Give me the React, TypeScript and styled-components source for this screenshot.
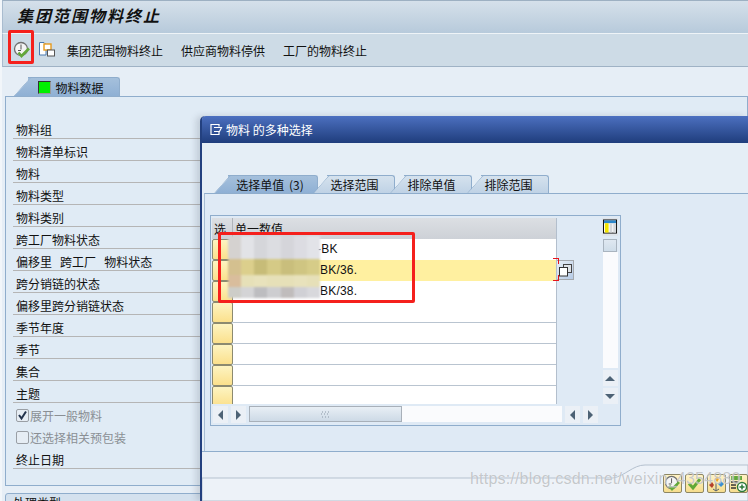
import React from 'react'
import styled, { createGlobalStyle } from 'styled-components'

const GlobalStyle = createGlobalStyle`
  html, body {
    margin: 0;
    padding: 0;
    overflow: hidden;
  }
  * {
    box-sizing: border-box;
  }
`

const Screen = styled.div`
  position: relative;
  width: 748px;
  height: 501px;
  overflow: hidden;
  display: flex;
  flex-direction: column;
  background: #e6eef6;
  border-left: 2px solid #f2f6fa;
  color: #111;
  font-family: 'Noto Sans CJK SC', 'Liberation Sans', sans-serif;
  font-size: 12px;
`
const TitleBar = styled.header`
  height: 33px;
  flex: none;
  padding: 3px 0 0 14px;
  background: linear-gradient(#d5e0ea, #b7cadb);
  border-top: 1px solid #9db0c2;
  border-left: 1px solid #a9bccf;
  font-size: 16px;
  line-height: 22px;
  font-weight: 700;
  font-style: italic;
  letter-spacing: 2px;
`
const Toolbar = styled.nav`
  height: 34px;
  flex: none;
  display: flex;
  align-items: center;
  padding-left: 10px;
  background: #cddbe6;
  border-top: 1px solid #eef3f7;
  border-left: 1px solid #a9bccf;
  border-bottom: 1px solid #9fb2c5;
`
const ToolIcons = styled.div`
  display: flex;
  gap: 7px;
  margin-right: 11px;
`
const ToolIcon = styled.span`
  display: flex;
  width: 18px;
  height: 18px;
`
const ToolLabel = styled.span`
  & + & {
    margin-left: 18px;
  }
`
const Main = styled.main`
  flex: 1;
  padding: 10px 0 0 3px;
  display: flex;
  flex-direction: column;
`
const TabStrip = styled.div<{ $height: number }>`
  display: flex;
  flex: none;
  height: ${(p) => p.$height}px;
`
const Tab = styled.div<{ $active?: boolean; $width: number; $lead?: number }>`
  position: relative;
  width: ${(p) => p.$width}px;
  height: 100%;
  display: flex;
  align-items: center;
  justify-content: center;
  gap: 4px;
  margin-left: ${(p) => p.$lead ?? 9}px;
  padding-right: ${(p) => (p.$active ? 5 : 12)}px;
  background: ${(p) =>
    p.$active
      ? 'linear-gradient(#a5c0dc, #8fb0d4)'
      : 'linear-gradient(#d5e2ee, #bfd2e5)'};
  border: 1px solid #8fadcc;
  border-left: 0;
  border-bottom: 0;
  border-radius: 0 3px 0 0;
  &::before {
    content: '';
    position: absolute;
    left: -6px;
    top: -1px;
    bottom: 0;
    width: 16px;
    background: inherit;
    border-left: 1px solid #8fadcc;
    border-top: 1px solid #8fadcc;
    transform: skewX(-42deg);
    border-radius: 2px 0 0 0;
  }
  & > * {
    position: relative;
  }
`
const TabText = styled.span`
  position: relative;
  white-space: pre;
  word-spacing: 2px;
`
const Status = styled.span`
  width: 13px;
  height: 13px;
  background: #00f000;
  border: 1px solid #333;
  border-right-color: #999;
  border-bottom-color: #999;
`
const FormPanel = styled.section`
  height: 390px;
  flex: none;
  padding: 20px 0 0 7px;
  background: #e0ebf5;
  border: 1px solid #8fadcc;
`
const FormRow = styled.div<{ $plain?: boolean }>`
  height: 22px;
  padding: 3px 0 0 3px;
  display: flex;
  align-items: center;
  gap: 1px;
  border-bottom: 1px solid ${(p) => (p.$plain ? 'transparent' : '#b5b5b5')};
  white-space: pre;
  color: ${(p) => (p.$plain ? '#8a8f94' : '#111')};
`
const CheckBox = styled.span`
  width: 13px;
  height: 13px;
  display: flex;
  border: 1px solid #9a9fa5;
  border-radius: 2px;
  background: #e6edf4;
`
const LowerTab = styled.div`
  margin-top: 7px;
  height: 20px;
  padding-left: 7px;
  background: #d4e1ee;
  border: 1px solid #8fadcc;
  border-radius: 3px 0 0 0;
`

const Dialog = styled.section`
  position: absolute;
  left: 198px;
  top: 116px;
  width: 548px;
  height: 385px;
  display: flex;
  flex-direction: column;
  background: #e5eef6;
  border-left: 2px solid #23407f;
  border-radius: 5px 0 0 0;
  box-shadow: -4px 0 6px rgba(60, 70, 90, 0.18);
`
const DialogTitle = styled.header`
  height: 27px;
  flex: none;
  display: flex;
  align-items: center;
  gap: 3px;
  padding-left: 5px;
  color: #fff;
  background: linear-gradient(#4c70c0, #1f3d7c);
  border-radius: 4px 0 0 0;
`
const DialogBody = styled.div`
  height: 309px;
  flex: none;
  padding: 32px 0 0 2px;
  display: flex;
  flex-direction: column;
  background: #e5eef6;
  border-bottom: 1px solid #8fadcc;
`
const TabPanel = styled.div`
  flex: 1;
  padding: 21px 0 0 5px;
  background: #dfeaf5;
  border-top: 1px solid #8fadcc;
  border-left: 1px solid #a7bdd3;
`
const Frame = styled.div`
  width: 411px;
  height: 211px;
  padding: 2px 2px 0 1px;
  display: grid;
  grid-template-columns: 390px 16px;
  grid-template-rows: 186px 20px;
  border: 1px solid #8fadcc;
`
const TableArea = styled.div`
  width: 345px;
  overflow: hidden;
  display: flex;
  flex-direction: column;
  border-right: 1px solid #b3bfcd;
`
const TableHead = styled.div`
  height: 21px;
  flex: none;
  display: grid;
  grid-template-columns: 21px 1fr;
  background: linear-gradient(#dcdfe3, #cdd1d7);
`
const HeadCell = styled.div`
  padding-left: 2px;
  line-height: 22px;
  border-right: 1px solid #b0b4ba;
  &:last-child {
    border-right: 0;
  }
`
const Row = styled.div`
  height: 21px;
  flex: none;
  display: grid;
  grid-template-columns: 21px 1fr;
`
const SelectCell = styled.button`
  margin: 0;
  padding: 0;
  height: 21px;
  background: linear-gradient(#fdf4c2, #fbe08c);
  border: 1px solid #8c8a70;
  border-radius: 2px;
`
const ValueCell = styled.div<{ $selected?: boolean; $indent?: number }>`
  padding-left: ${(p) => p.$indent ?? 0}px;
  background: ${(p) => (p.$selected ? '#fff0a0' : '#fff')};
  border-bottom: 1px solid #b9c4d0;
  font-family: 'Liberation Sans', sans-serif;
  font-size: 12px;
  letter-spacing: 0.2px;
  line-height: 21px;
`
const CopyButton = styled.button`
  position: absolute;
  left: 555px;
  top: 260px;
  width: 17px;
  height: 20px;
  margin: 0;
  padding: 3px 0 0 1px;
  background: linear-gradient(135deg, #e8eef5, #b6cbe6);
  border: 1px solid #a5a9ae;
  border-left: 0;
`
const Bracket = styled.span<{ $bottom?: boolean }>`
  position: absolute;
  left: 551px;
  top: ${(p) => (p.$bottom ? 275 : 258)}px;
  width: 6px;
  height: 6px;
  border-right: 1px solid #e8141c;
  ${(p) =>
    p.$bottom
      ? 'border-bottom: 1px solid #e8141c;'
      : 'border-top: 1px solid #e8141c;'}
`
const VScroll = styled.div`
  display: flex;
  flex-direction: column;
  align-items: center;
`
const ConfigButton = styled.span`
  width: 16px;
  height: 18px;
  padding: 1px;
  display: flex;
  background: #dfe4ea;
`
const ScrollThumb = styled.span`
  width: 14px;
  height: 13px;
  margin-top: 3px;
  flex: none;
  background: linear-gradient(#dfe8f1, #cfdde9);
  border: 1px solid #a9b4bf;
`
const ScrollTrack = styled.span`
  flex: 1;
  width: 15px;
  background: #fafbfd;
`
const ArrowButton = styled.span`
  width: 15px;
  height: 16px;
  flex: none;
  margin-top: 2px;
  display: flex;
  align-items: center;
  justify-content: center;
  background: #ebf0f6;
`
const HScroll = styled.div`
  grid-column: 1 / span 2;
  height: 18px;
  margin-top: 2px;
  display: flex;
  gap: 3px;
  padding-left: 1px;
`
const HArrow = styled(ArrowButton)`
  margin-top: 0;
  height: 17px;
`
const HThumb = styled.span`
  width: 153px;
  height: 16px;
  display: flex;
  align-items: center;
  justify-content: center;
  background: linear-gradient(#e8eff5, #cddae6);
  border: 1px solid #a8b0b9;
`
const HTrack = styled.span`
  width: 160px;
  height: 16px;
  margin-left: -3px;
  background: #fafbfd;
`
const Triangle = styled.span<{ $dir: 'up' | 'down' | 'left' | 'right' }>`
  width: 0;
  height: 0;
  border: 5px solid transparent;
  ${(p) => {
    const c = '#4d6275'
    if (p.$dir === 'up') return `border-top: 0; border-bottom-color: ${c};`
    if (p.$dir === 'down') return `border-bottom: 0; border-top-color: ${c};`
    if (p.$dir === 'left') return `border-left: 0; border-right-color: ${c};`
    return `border-right: 0; border-left-color: ${c};`
  }}
`
const Footer = styled.footer`
  position: relative;
  flex: 1;
  background: #e9eff6;
`
const FooterCurve = styled.svg`
  position: absolute;
  left: 0;
  top: 0;
`
const ActionBar = styled.div`
  position: absolute;
  right: 0;
  top: 22px;
  display: flex;
  gap: 3px;
`
const ActionButton = styled.button`
  width: 19px;
  height: 19px;
  margin: 0;
  padding: 0;
  display: flex;
  background: linear-gradient(#fff3c4, #f6dd8e);
  border: 1px solid #8d8663;
  border-radius: 2px;
`
const Watermark = styled.div`
  position: absolute;
  left: 468px;
  top: 470px;
  font-family: 'Liberation Sans', sans-serif;
  font-size: 16px;
  line-height: 18px;
  letter-spacing: 0.2px;
  color: rgba(150, 155, 160, 0.55);
  text-shadow: 0 0 1px rgba(255, 255, 255, 0.9);
  white-space: nowrap;
`
const RedBox = styled.div<{ $x: number; $y: number; $w: number; $h: number }>`
  position: absolute;
  left: ${(p) => p.$x}px;
  top: ${(p) => p.$y}px;
  width: ${(p) => p.$w}px;
  height: ${(p) => p.$h}px;
  border: 3px solid #f5201c;
  border-radius: 2px;
`
const Mosaic = styled.div`
  position: absolute;
  left: 226px;
  top: 236px;
  width: 92px;
  height: 62px;
  display: grid;
  grid-template-columns: repeat(7, 1fr);
  grid-template-rows: 23px 16px 12px 11px;
  filter: blur(1px);
`
const MosaicCell = styled.span<{ $c: string }>`
  background: ${(p) => p.$c};
`

const ClockCheck = ({ size = 18 }: { size?: number }) => (
  <svg width={size} height={size} viewBox="0 0 18 18">
    <circle cx="8" cy="8" r="6.5" fill="#f4f4f4" stroke="#6f6f6f" strokeWidth="1.3" />
    <path d="M8 3.5V8.5M5 9.5H8" stroke="#555" strokeWidth="1" fill="none" />
    <path d="M5.5 11.5L8.5 15L16 7.5" stroke="#62a83a" strokeWidth="2.6" fill="none" />
  </svg>
)
const CopyDocs = () => (
  <svg width="18" height="18" viewBox="0 0 18 18">
    <path d="M1.5 1.5H6L8 3.5V14H1.5Z" fill="#fff" stroke="#4a7ab0" />
    <rect x="6" y="3" width="7" height="6" fill="#fff" stroke="#e79a1c" strokeWidth="1.4" />
    <rect x="9.5" y="9" width="7" height="6" fill="#fff" stroke="#555" />
  </svg>
)
const PopupIcon = () => (
  <svg width="16" height="14" viewBox="0 0 16 14">
    <path d="M7 4.5H14.5L12.5 8.5H7M4 6V1.5H12V3.5M4 6V11.5H12V9" fill="none" stroke="#fff" strokeWidth="1.2" />
  </svg>
)
const CheckMark = () => (
  <svg width="11" height="11" viewBox="0 0 11 11">
    <path d="M2 5L4.5 8.5L9 1.5" fill="none" stroke="#23344d" strokeWidth="2" />
  </svg>
)
const OverlapSquares = () => (
  <svg width="13" height="13" viewBox="0 0 13 13">
    <rect x="4.5" y="0.5" width="8" height="8" fill="#dfe3e8" stroke="#444" />
    <rect x="0.5" y="3.5" width="8" height="8.5" fill="#fff" stroke="#333" />
  </svg>
)
const ColumnsIcon = () => (
  <svg width="15" height="15" viewBox="0 0 15 15">
    <rect x="0.5" y="0.5" width="14" height="14" fill="#fff" stroke="#000" />
    <rect x="1" y="1" width="13" height="3" fill="#2d86c9" />
    <rect x="2" y="4" width="4" height="10" fill="#f2e400" />
    <rect x="7" y="4" width="3" height="10" fill="#d5d8dc" />
    <rect x="11" y="4" width="3" height="10" fill="#d5d8dc" />
  </svg>
)
const GripDots = () => (
  <svg width="9" height="7" viewBox="0 0 9 7">
    <path d="M1 1h1M4 1h1M7 1h1M0 3h1M3 3h1M6 3h1M1 6h1M4 6h1M7 6h1" stroke="#8b99a8" />
  </svg>
)
const GreenCheck = () => (
  <svg width="17" height="17" viewBox="0 0 17 17">
    <path d="M3 8.5L7 13L14 4" stroke="#5fa836" strokeWidth="3" fill="none" />
  </svg>
)
const Sparkle = () => (
  <svg width="17" height="17" viewBox="0 0 17 17">
    <path d="M9 1L11 4L9 7L7 4Z" fill="#f0a21f" />
    <path d="M13 6L16 9L13 12L10 9Z" fill="#3a8fd0" />
    <path d="M4 7L6 10L4 13L1 10Z" fill="#b5402a" />
    <path d="M8 8V16M5 14L8 16L11 14" stroke="#55606c" fill="none" />
  </svg>
)
const AddList = () => (
  <svg width="17" height="17" viewBox="0 0 17 17">
    <rect x="1" y="1" width="11" height="4" fill="#62a83a" />
    <path d="M1 7H8M1 10H6M1 13H6" stroke="#333" strokeWidth="1.4" />
    <circle cx="12" cy="12" r="4.5" fill="#fff" stroke="#2b7a3a" strokeWidth="1.4" />
    <path d="M12 9.5V14.5M9.5 12H14.5" stroke="#2b7a3a" strokeWidth="1.5" />
  </svg>
)

const formRows = [
  '物料组',
  '物料清单标识',
  '物料',
  '物料类型',
  '物料类别',
  '跨工厂物料状态',
  '偏移里   跨工厂   物料状态',
  '跨分销链的状态',
  '偏移里跨分销链状态',
  '季节年度',
  '季节',
  '集合',
  '主题',
]
const tableRows = [
  { value: '-BK', indent: 84 },
  { value: 'BK/36.', indent: 87, selected: true },
  { value: 'BK/38.', indent: 87 },
  { value: '' },
  { value: '' },
  { value: '' },
  { value: '' },
  { value: '' },
]
const mosaicColors = [
  '#d5d2d0', '#e2e3e7', '#d5d6da', '#dcdde1', '#d5d5da', '#dcdce2', '#e2e3e8',
  '#d4c08f', '#dccf8c', '#c7bc78', '#d5ca86', '#c9be7c', '#cfc582', '#d6cc88',
  '#d9bd9c', '#e6e0b8', '#e8e2bc', '#e6e0b8', '#e6e0b8', '#e8e2bc', '#e6e0b8',
  '#cdcdc8', '#d4d4d6', '#bdbdc0', '#cdcdd0', '#c0bcbc', '#d0d0d5', '#d8d8dc',
]

export default function App() {
  return (
    <Screen>
      <GlobalStyle />
      <TitleBar>集团范围物料终止</TitleBar>
      <Toolbar>
        <ToolIcons>
          <ToolIcon>
            <ClockCheck />
          </ToolIcon>
          <ToolIcon>
            <CopyDocs />
          </ToolIcon>
        </ToolIcons>
        <ToolLabel>集团范围物料终止</ToolLabel>
        <ToolLabel>供应商物料停供</ToolLabel>
        <ToolLabel>工厂的物料终止</ToolLabel>
      </Toolbar>
      <Main>
        <TabStrip $height={19}>
          <Tab $active $width={92} $lead={23}>
            <Status />
            <TabText>物料数据</TabText>
          </Tab>
        </TabStrip>
        <FormPanel>
          {formRows.map((label) => (
            <FormRow key={label}>{label}</FormRow>
          ))}
          <FormRow $plain>
            <CheckBox>
              <CheckMark />
            </CheckBox>
            展开一般物料
          </FormRow>
          <FormRow $plain>
            <CheckBox />
            还选择相关预包装
          </FormRow>
          <FormRow>终止日期</FormRow>
        </FormPanel>
        <LowerTab>处理类型</LowerTab>
      </Main>

      <Dialog>
        <DialogTitle>
          <PopupIcon />
          物料 的多种选择
        </DialogTitle>
        <DialogBody>
          <TabStrip $height={18}>
            <Tab $active $width={90} $lead={24}>
              <TabText>选择单值 (3)</TabText>
            </Tab>
            <Tab $width={68}>
              <TabText>选择范围</TabText>
            </Tab>
            <Tab $width={68}>
              <TabText>排除单值</TabText>
            </Tab>
            <Tab $width={68}>
              <TabText>排除范围</TabText>
            </Tab>
          </TabStrip>
          <TabPanel>
            <Frame>
              <TableArea>
                <TableHead>
                  <HeadCell>选</HeadCell>
                  <HeadCell>单一数值</HeadCell>
                </TableHead>
                {tableRows.map((row, i) => (
                  <Row key={i}>
                    <SelectCell />
                    <ValueCell $selected={row.selected} $indent={row.indent}>
                      {row.value}
                    </ValueCell>
                  </Row>
                ))}
              </TableArea>
              <VScroll>
                <ConfigButton>
                  <ColumnsIcon />
                </ConfigButton>
                <ScrollThumb />
                <ScrollTrack />
                <ArrowButton>
                  <Triangle $dir="up" />
                </ArrowButton>
                <ArrowButton>
                  <Triangle $dir="down" />
                </ArrowButton>
              </VScroll>
              <HScroll>
                <HArrow>
                  <Triangle $dir="left" />
                </HArrow>
                <HArrow>
                  <Triangle $dir="right" />
                </HArrow>
                <HThumb>
                  <GripDots />
                </HThumb>
                <HTrack />
                <HArrow>
                  <Triangle $dir="left" />
                </HArrow>
                <HArrow>
                  <Triangle $dir="right" />
                </HArrow>
              </HScroll>
            </Frame>
          </TabPanel>
        </DialogBody>
        <Footer>
          <FooterCurve width="546" height="49" viewBox="0 0 546 49">
            <path
              d="M0 26H411C423 24 431 13 443 13H546V49H0Z"
              fill="#edf2f8"
              stroke="#b5c1cf"
            />
          </FooterCurve>
          <ActionBar>
            <ActionButton>
              <ClockCheck size={17} />
            </ActionButton>
            <ActionButton>
              <GreenCheck />
            </ActionButton>
            <ActionButton>
              <Sparkle />
            </ActionButton>
            <ActionButton>
              <AddList />
            </ActionButton>
          </ActionBar>
        </Footer>
      </Dialog>

      <CopyButton>
        <OverlapSquares />
      </CopyButton>
      <Bracket />
      <Bracket $bottom />
      <Mosaic>
        {mosaicColors.map((c, i) => (
          <MosaicCell key={i} $c={c} />
        ))}
      </Mosaic>
      <RedBox $x={6} $y={30} $w={26} $h={34} />
      <RedBox $x={216} $y={232} $w={197} $h={71} />
      <Watermark>https://blog.csdn.net/weixin_4354880</Watermark>
    </Screen>
  )
}
